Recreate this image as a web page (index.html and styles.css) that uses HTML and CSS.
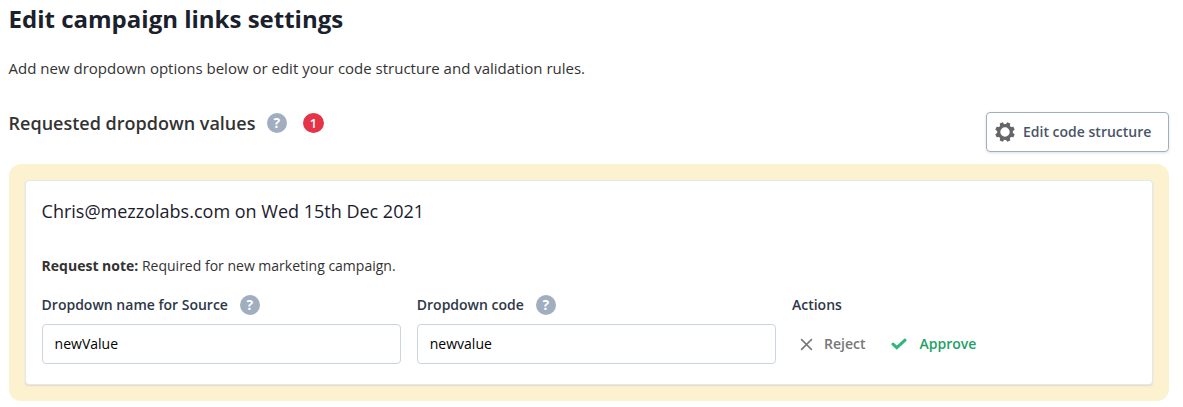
FILE: index.html
```html
<!DOCTYPE html>
<html lang="en">
<head>
<meta charset="utf-8">
<title>Edit campaign links settings</title>
<link rel="stylesheet" href="styles.css">
</head>
<body>
<main class="page">
  <h1 class="title">Edit campaign links settings</h1>
  <p class="intro">Add new dropdown options below or edit your code structure and validation rules.</p>
  <header class="section-head">
    <div class="section-title">
      <h2 class="subtitle">Requested dropdown values</h2>
      <span class="help">?</span>
      <span class="count">1</span>
    </div>
    <button class="edit-button">
      <svg class="gear" viewBox="0 0 20 20"><g fill="#666" transform="rotate(22.5 10 10)"><path id="tooth" d="M7.4 4 8.4.2h3.2l1 3.8z"/><use href="#tooth" transform="rotate(45 10 10)"/><use href="#tooth" transform="rotate(90 10 10)"/><use href="#tooth" transform="rotate(135 10 10)"/><use href="#tooth" transform="rotate(180 10 10)"/><use href="#tooth" transform="rotate(225 10 10)"/><use href="#tooth" transform="rotate(270 10 10)"/><use href="#tooth" transform="rotate(315 10 10)"/></g><circle cx="10" cy="10" r="6.3" fill="none" stroke="#666" stroke-width="3.2"/></svg>
      <span class="button-text">Edit code structure</span>
    </button>
  </header>
  <section class="requests">
    <article class="card">
      <h3 class="requester">Chris@mezzolabs.com on Wed 15th Dec 2021</h3>
      <p class="note"><strong>Request note:</strong> Required for new marketing campaign.</p>
      <div class="fields">
        <div class="field">
          <div class="label"><span class="label-text">Dropdown name for Source</span> <span class="help">?</span></div>
          <input class="input" value="newValue">
        </div>
        <div class="field">
          <div class="label"><span class="label-text">Dropdown code</span> <span class="help">?</span></div>
          <input class="input" value="newvalue">
        </div>
        <div class="field">
          <div class="label"><span class="label-text">Actions</span></div>
          <div class="actions">
            <button class="action reject"><svg class="cross" viewBox="0 0 14 14"><path d="M1.2 1.2l11.6 11.6M12.8 1.2L1.2 12.8"/></svg><span class="button-text">Reject</span></button>
            <button class="action approve"><svg class="check" viewBox="0 0 16 12"><path d="M2 6.2l3.8 3.5L14 2.2"/></svg><span class="button-text">Approve</span></button>
          </div>
        </div>
      </div>
    </article>
  </section>
</main>
</body>
</html>
```
FILE: styles.css
```css
* { box-sizing: border-box; }
body { margin: 0; background: #fff; color: #1a202c; font-family: "Open Sans", sans-serif; font-size: 14px; overflow: hidden; }
h1, h2, h3, p { margin: 0; }
button { font: inherit; background: none; border: 0; padding: 0; }
.page { padding: 0 14px 0 9px; }
.title { padding-top: 2px; margin-left: -0.4px; font-size: 24px; line-height: 33px; font-weight: 700; }
.intro { margin-top: 23px; margin-left: -0.4px; font-size: 15px; line-height: 21px; color: #333; }
.section-head { display: flex; justify-content: space-between; margin-top: 33px; }
.section-title { display: flex; align-items: center; height: 22px; margin-left: -0.4px; }
.subtitle { font-size: 18px; font-weight: 600; color: #333; }
.help, .count { display: inline-flex; flex: none; align-items: center; justify-content: center; width: 20px; height: 20px; border-radius: 50%; background: #a0aec0; color: #fff; font-size: 14px; line-height: 20px; font-weight: 700; }
.section-title .help { margin-left: 11.5px; }
.count { width: 21px; margin-left: 16px; background: #e53347; font-size: 13px; font-weight: 600; }
.edit-button { display: flex; align-items: center; gap: 8px; width: 183px; height: 40px; padding-left: 8px; border: 1px solid #a0aec0; border-radius: 4px; color: #4a5568; font-weight: 600; box-shadow: 0 1px 3px rgba(0,0,0,.12); white-space: nowrap; }
.button-text, .label-text { line-height: 20px; }
.gear { width: 20px; height: 20px; }
.requests { margin-top: 12px; padding: 16px; border-radius: 12px; background: #fdf2d0; }
.card { height: 205px; padding: 18px 16px 20px 15.6px; border: 1px solid #e2e8f0; border-radius: 4px; background: #fff; box-shadow: 0 1px 2px rgba(0,0,0,.1); }
.requester { font-size: 18px; line-height: 24px; font-weight: 400; }
.note { margin-top: 33px; line-height: 20px; color: #333; }
.fields { display: flex; gap: 16px; margin-top: 19px; }
.field { flex: none; width: 359.2px; }
.field:last-child { width: 300px; }
.label { display: flex; align-items: center; gap: 12px; height: 20px; font-weight: 600; color: #2d3748; }
.input { display: block; width: 359px; height: 40px; margin-top: 9px; padding: 0 12px 2px; border: 1px solid #cbd5e0; border-radius: 4px; background: #fff; color: #000; font: inherit; }
.actions { display: flex; height: 40px; margin-top: 9px; padding-left: 8px; gap: 26px; }
.action { display: flex; align-items: center; font-weight: 600; }
.reject { gap: 11px; color: #777; }
.approve { gap: 12px; color: #239f67; }
.cross { width: 13px; height: 13px; fill: none; stroke: #777; stroke-width: 1.6; }
.check { width: 16px; height: 12px; fill: none; stroke: #2fb67c; stroke-width: 3; stroke-linecap: round; }
```
